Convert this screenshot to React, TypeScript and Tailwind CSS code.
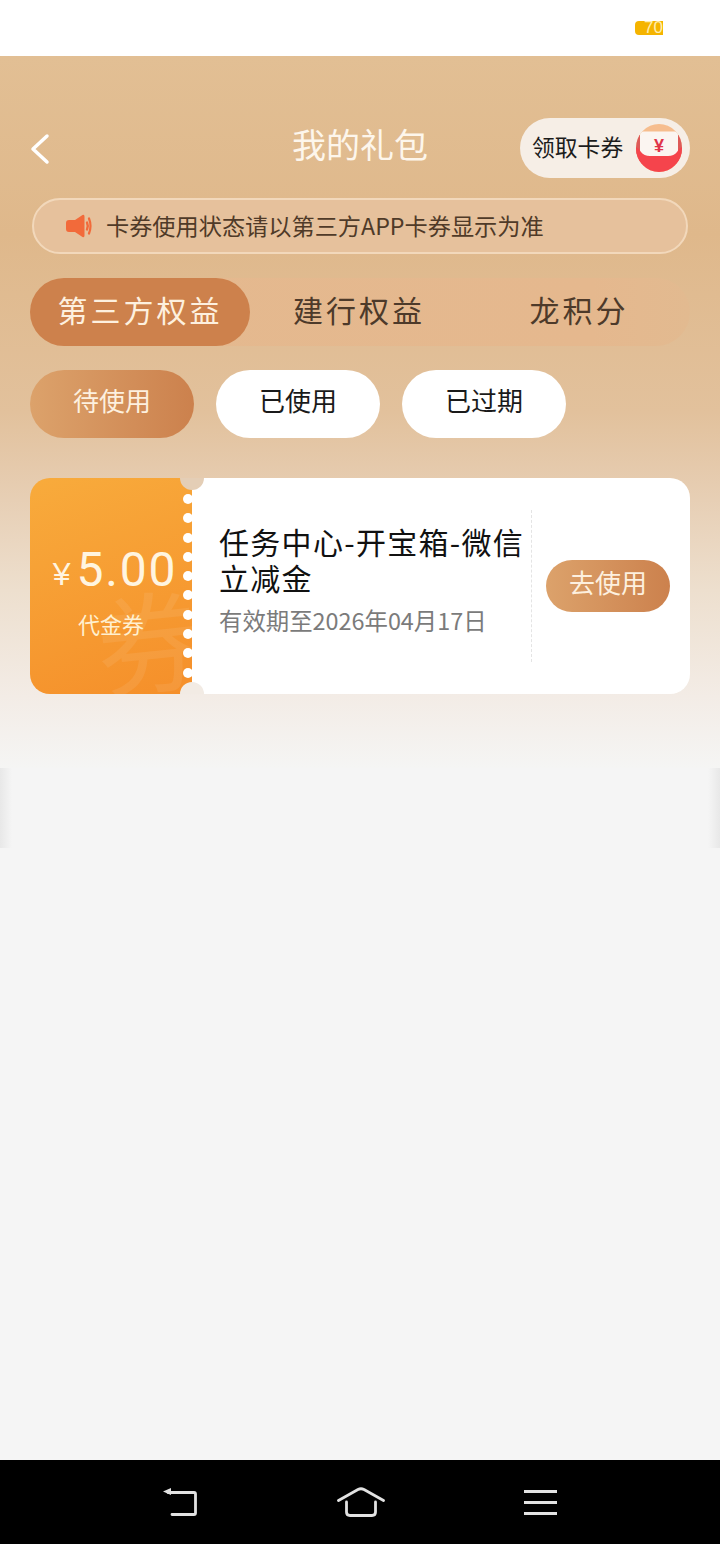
const CJK = "font-['Noto_Sans_CJK_SC','Noto_Sans',sans-serif]";

const TABS = ['第三方权益', '建行权益', '龙积分'];
const FILTERS = ['待使用', '已使用', '已过期'];
const DOTS = [0, 1, 2, 3, 4, 5, 6, 7, 8, 9];

function StatusBar() {
  return (
    <div className="h-14 bg-white flex justify-end items-start pt-[21px] pr-[57px]">
      <div className="w-7 h-[14px] overflow-hidden rounded-l-[4px] bg-[#f5b400] text-[#ffeeb0] text-[17px] leading-[14px] pl-[9px] font-['Liberation_Sans',sans-serif] whitespace-nowrap">
        70
      </div>
    </div>
  );
}

function RedPacket() {
  return (
    <svg width="48" height="50" viewBox="0 0 48 50">
      <defs>
        <clipPath id="packet">
          <ellipse cx="24" cy="25" rx="23" ry="24" />
        </clipPath>
      </defs>
      <g clipPath="url(#packet)">
        <rect width="48" height="50" fill="#f6bd8e" />
        <rect x="0" y="12" width="7" height="38" fill="#dd5a58" />
        <rect x="41" y="12" width="7" height="38" fill="#dd5a58" />
        <path d="M5 36V12q0-3.500 3.500-3.500h31q3.500 0 3.500 3.500v24z" fill="#fbf5f1" />
        <path d="M0 24q4 1 6 5 3 4 9 4h18q6 0 9-4 2-4 6-5v26H0z" fill="#f5444c" />
      </g>
      <text x="24" y="29" textAnchor="middle" fontSize="18" fontWeight="700" fill="#e0344a" fontFamily="Liberation Sans, sans-serif">¥</text>
    </svg>
  );
}

function Speaker() {
  return (
    <svg width="27" height="24" viewBox="0 0 27 24" fill="none">
      <path d="M4 6h6l7.500-5q2-.8 2 1.500v19q0 2.300-2 1.500L10 18H4a3 3 0 0 1-3-3V9a3 3 0 0 1 3-3z" fill="#f26a3a" />
      <path d="M22 8.500q1.600 3.500 0 7" stroke="#f26a3a" strokeWidth="2.400" strokeLinecap="round" />
      <path d="M24 4.500q3 7.500 0 15" stroke="#f26a3a" strokeWidth="2.200" strokeLinecap="round" />
    </svg>
  );
}

function Header() {
  return (
    <div className="relative h-[60px] flex items-center justify-center">
      <svg className="absolute left-[30px] top-[15px]" width="20" height="32" viewBox="0 0 20 32" fill="none">
        <path d="M17 3L3 16l14 13" stroke="#fff" strokeWidth="3.500" strokeLinecap="round" strokeLinejoin="round" />
      </svg>
      <h1 className="text-[34px] leading-[44px] text-[#fdf6ec] font-normal -mt-[8px]">我的礼包</h1>
      <div className="absolute right-[30px] top-0 w-[170px] h-[60px] rounded-full bg-[#f6eee6] flex items-center pl-3 pr-[7px] justify-between">
        <span className="text-[22.800px] leading-none text-[#1c1c1c] whitespace-nowrap pb-[2px]">领取卡券</span>
        <RedPacket />
      </div>
    </div>
  );
}

function Notice() {
  return (
    <div className="mt-5 mx-[32px] h-14 rounded-full border-2 border-[#f2d8bb] bg-[#e6c19c] flex items-center pl-[31px] gap-[14px]">
      <Speaker />
      <span className="text-[23.200px] leading-none text-[#4f3a28] whitespace-nowrap">卡券使用状态请以第三方APP卡券显示为准</span>
    </div>
  );
}

function Tabs() {
  return (
    <div className="mt-6 mx-[30px] h-[68px] rounded-[34px] bg-[linear-gradient(90deg,#e4b98f_0%,#e5b88e_85%,#e2ba90_100%)] flex items-center">
      {TABS.map((tab, i) => (
        <div
          key={tab}
          className={
            i === 0
              ? 'w-[220px] h-full rounded-full bg-[#cd814c] text-[#fdf0df] flex items-center justify-center text-[30px] tracking-[3px] pb-[5px]'
              : i === 1
                ? 'w-[218px] h-full text-[#4d3a2a] flex items-center justify-center text-[30px] tracking-[3px] pb-[5px]'
                : 'w-[222px] h-full text-[#4d3a2a] flex items-center justify-center text-[30px] tracking-[3px] pb-[5px]'
          }
        >
          {tab}
        </div>
      ))}
    </div>
  );
}

function Filters() {
  return (
    <div className="mt-6 mx-[30px] flex gap-[22px]">
      {FILTERS.map((f, i) => (
        <div
          key={f}
          className={
            i === 0
              ? 'w-[164px] h-[68px] rounded-full bg-[linear-gradient(90deg,#dca26b,#cc814d)] text-[#fdf0df] flex items-center justify-center text-[26px] pb-[10px]'
              : 'w-[164px] h-[68px] rounded-full bg-white text-[#1a1a1a] flex items-center justify-center text-[26px] pb-[10px]'
          }
        >
          {f}
        </div>
      ))}
    </div>
  );
}

function Coupon() {
  return (
    <div className="relative mt-10 mx-[30px] h-[216px] flex overflow-hidden">
      <div className="relative w-[162px] rounded-l-[20px] overflow-hidden bg-[linear-gradient(160deg,#f8ab3c,#f58f2a)] flex flex-col items-center text-[#fff5e0]">
        <span className="absolute left-[66px] top-[104px] text-[110px] leading-none text-white/[0.08] whitespace-nowrap -rotate-6">券</span>
        <div className="relative mt-[60px] ml-[8px] flex items-center h-[64px] whitespace-nowrap">
          <span className="text-[32px] leading-none mr-[6px] mt-2 font-['Liberation_Sans',sans-serif]">¥</span>
          <span className="text-[48px] leading-none tracking-[1.800px] font-['Roboto',sans-serif] font-normal">5.00</span>
        </div>
        <span className="relative text-[22px] leading-none mt-[10px] text-[#fff0d0]">代金券</span>
      </div>
      <div className="flex-1 bg-white rounded-r-[20px] flex items-center">
        <div className="w-[339px] pl-[27px] pr-[3px] pb-[13px]">
          <div className="text-[30px] leading-[36px] text-[#111] tracking-[1.300px] break-all">任务中心-开宝箱-微信立减金</div>
          <div className="mt-[9px] text-[23.400px] leading-8 text-[#7b7b7b] whitespace-nowrap">有效期至2026年04月17日</div>
        </div>
        <div className="h-[152px] border-l border-dashed border-[#e4e4e4]" />
        <div className="ml-[14px] w-[124px] h-[52px] rounded-full bg-[linear-gradient(90deg,#dca26b,#cc814d)] text-[#fdf0df] text-[26px] flex items-center justify-center pb-[10px]">
          去使用
        </div>
      </div>
      {/* ticket edge */}
      <div className="absolute left-[150px] -top-[12px] w-6 h-6 rounded-full bg-[#e4ceb6]" />
      <div className="absolute left-[150px] -bottom-[12px] w-6 h-6 rounded-full bg-[#f2ebe4]" />
      <div className="absolute left-[153px] top-[16px] flex flex-col gap-[9.300px]">
        {DOTS.map((d) => (
          <div key={d} className="w-[10px] h-[10px] rounded-full bg-white" />
        ))}
      </div>
    </div>
  );
}

function NavBar() {
  return (
    <div className="h-[84px] bg-black flex items-center justify-center">
      <div className="w-[395px] flex items-center justify-between">
        <svg width="36" height="30" viewBox="1 0 36 30" fill="none" stroke="#e2e2e2" strokeWidth="2.800">
          <path d="M6 5.500h26a1.500 1.500 0 0 1 1.500 1.500v19a1.500 1.500 0 0 1-1.500 1.500H10" strokeLinecap="round" />
          <path d="M1 4.500L9 1v7z" fill="#e2e2e2" stroke="none" />
        </svg>
        <svg width="48" height="30" viewBox="0 0 48 30" fill="none" stroke="#e2e2e2" strokeWidth="2.800" strokeLinecap="round" strokeLinejoin="round">
          <path d="M1.500 13.500L21 2.500q3-1.500 6 0l19.500 11" />
          <path d="M9.500 15v10q0 3.500 3.500 3.500h22q3.500 0 3.500-3.500V15" />
        </svg>
        <svg width="34" height="26" viewBox="0 0 34 26" fill="#e2e2e2">
          <rect y="1" width="33" height="3" />
          <rect y="12" width="33" height="3" />
          <rect y="23" width="33" height="3" />
        </svg>
      </div>
    </div>
  );
}

export default function App() {
  return (
    <div className={`w-[720px] h-[1544px] flex flex-col bg-[#f5f5f5] ${CJK}`}>
      <StatusBar />
      <div className="h-[712px] pt-[62px] bg-[linear-gradient(180deg,#e2bf94_0%,#dfb88b_25%,#e2c19c_50%,#e6ccb0_60%,#eddfce_75%,#f3ece6_90%,#f5f5f4_100%)]">
        <Header />
        <Notice />
        <Tabs />
        <Filters />
        <Coupon />
      </div>
      <div className="h-[80px] flex justify-between">
        <div className="w-3 bg-[linear-gradient(90deg,#e8e8e8,#f5f5f5)]" />
        <div className="w-3 bg-[linear-gradient(270deg,#e8e8e8,#f5f5f5)]" />
      </div>
      <div className="flex-1" />
      <NavBar />
    </div>
  );
}
